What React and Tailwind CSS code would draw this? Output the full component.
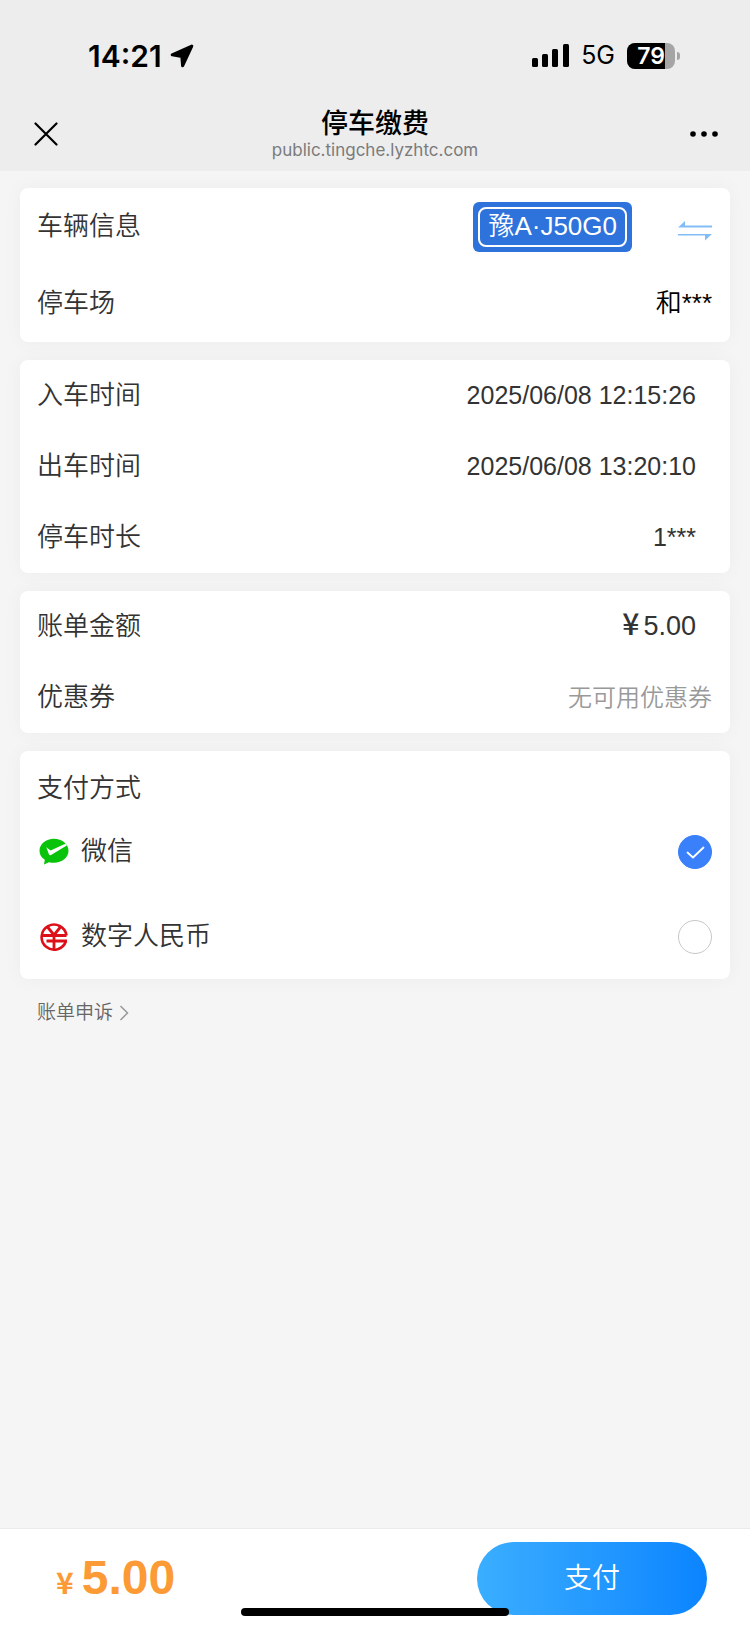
import React, { useState } from 'react';

const LocationArrow = () => (
  <svg className="h-6 w-6" viewBox="0 0 24 24" fill="currentColor" stroke="currentColor">
    <path strokeWidth={3} strokeLinejoin="round" d="M21.800 2L2.200 10.800l9.600 1.600 0.800 9.400z" />
  </svg>
);

const SignalBars = () => (
  <svg className="h-6 w-[37px]" viewBox="0 0 37 24" fill="currentColor">
    <rect x="0" y="14" width="6" height="9" rx="1.5" />
    <rect x="10" y="10" width="6" height="13" rx="1.5" />
    <rect x="20" y="5" width="6" height="18" rx="1.5" />
    <rect x="31" y="0" width="6" height="23" rx="1.5" />
  </svg>
);

const Battery = ({ level }) => (
  <div className="flex items-center gap-0.5">
    <div className="relative h-[26px] w-12 overflow-hidden rounded-lg bg-[#a5a5a5]">
      <div className="h-full bg-black" style={{ width: `${level}%` }} />
      <span className="absolute inset-0 text-center text-[23px] leading-[26px] font-semibold text-white">
        {level}
      </span>
    </div>
    <div className="h-2 w-[3px] rounded-r-full bg-[#a5a5a5]" />
  </div>
);

const SwapIcon = () => (
  <svg className="h-5 w-[34px]" viewBox="0 0 34 20" fill="#84bdf5">
    <path d="M0 6.500L7 0v4.600h27v1.900z" />
    <path d="M34 13L27 19.500v-4.900H0V13z" />
  </svg>
);

const WechatPayIcon = () => (
  <svg className="h-[30px] w-[30px]" viewBox="0 0 30 30">
    <path
      fill="#09c30b"
      d="M15 1.800C7 1.800.5 7.100.5 13.800c0 3.800 2 6.900 5.300 9L5 27.500l5-2.300c1.600.4 3.300.6 5 .6 8 0 14.500-5.300 14.500-12S23 1.800 15 1.800z"
    />
    <path fill="#fff" d="M7.300 10.300l4.300 3.300L26.800 6.400l1 2L12 18c-.9.500-1.600.3-2-.5z" />
  </svg>
);

const DigitalYuanIcon = () => (
  <svg className="h-[30px] w-[30px]" viewBox="0 0 30 30" fill="none" stroke="#dd1019">
    <path strokeWidth={2.600} d="M27.500 13.500A12.500 12.500 0 1 0 27 19" />
    <path strokeWidth={2.800} d="M8.500 5l6.500 8 6.500-8M15 12v15M3 13.500h24.500M7.500 19H28" />
  </svg>
);

const Card = ({ children }) => (
  <section className="rounded-lg bg-white pr-[18px] pl-[17px] shadow-[0_0_20px_rgba(0,0,0,0.04)]">
    {children}
  </section>
);

const Row = ({ label, children }) => (
  <div className="flex h-[71px] items-center justify-between">
    <span>{label}</span>
    {children}
  </div>
);

const times = [
  { label: '入车时间', value: '2025/06/08 12:15:26' },
  { label: '出车时间', value: '2025/06/08 13:20:10' },
  { label: '停车时长', value: '1***' },
];

const methods = [
  { id: 'wechat', name: '微信', Icon: WechatPayIcon },
  { id: 'ecny', name: '数字人民币', Icon: DigitalYuanIcon },
];

const PayMethod = ({ method, checked, onSelect }) => {
  const { Icon } = method;
  return (
    <label className="flex h-[85px] cursor-pointer items-center pl-0.5">
      <Icon />
      <span className="ml-3 flex-1">{method.name}</span>
      <span className="relative flex">
        <input
          type="radio"
          name="method"
          value={method.id}
          checked={checked}
          onChange={onSelect}
          className="h-[34px] w-[34px] appearance-none rounded-full border border-[#c8c8c8] bg-white checked:border-[#3a80fb] checked:bg-[#3a80fb]"
        />
        {checked && (
          <svg className="pointer-events-none absolute inset-0" viewBox="0 0 34 34" fill="none" stroke="#fff">
            <path strokeWidth={1.800} strokeLinecap="round" strokeLinejoin="round" d="M9.500 17.500l5.500 5L25.500 12.500" />
          </svg>
        )}
      </span>
    </label>
  );
};

export default function App() {
  const [selected, setSelected] = useState('wechat');

  return (
    <div className="flex min-h-screen flex-col bg-[#f5f5f5] font-['Liberation_Sans','Noto_Sans_CJK_SC',sans-serif] text-[26px] font-[350] text-[#333]">
      <header className="bg-[#ededed] font-['Inter','Noto_Sans_CJK_SC',sans-serif] text-black">
        {/* Status bar */}
        <div className="flex items-center justify-between pt-9 pr-[70px] pl-[88px]">
          <div className="flex h-10 items-center gap-2">
            <span className="text-[30px] font-semibold">14:21</span>
            <LocationArrow />
          </div>
          <div className="flex h-10 items-center gap-3">
            <SignalBars />
            <span className="text-[25px] font-normal">5G</span>
            <Battery level={79} />
          </div>
        </div>

        {/* Title bar */}
        <div className="flex h-[95px] items-center justify-between px-8 pt-5">
          <button type="button" aria-label="关闭" className="flex h-7 w-7 items-center justify-center">
            <svg className="h-6 w-6" viewBox="0 0 24 24" fill="none" stroke="currentColor">
              <path strokeWidth={2.200} strokeLinecap="round" d="M1.500 1.500l21 21M22.500 1.500l-21 21" />
            </svg>
          </button>
          <div className="flex flex-col items-center">
            <h1 className="text-[27px] leading-8 font-medium">停车缴费</h1>
            <p className="text-[17px] leading-5 font-normal text-[#7b7b7b]">public.tingche.lyzhtc.com</p>
          </div>
          <button type="button" aria-label="更多" className="flex h-7 w-7 items-center justify-center">
            <svg className="h-2 w-7" viewBox="0 0 28 8" fill="currentColor">
              <circle cx="3" cy="4" r="2.800" />
              <circle cx="14" cy="4" r="2.800" />
              <circle cx="25" cy="4" r="2.800" />
            </svg>
          </button>
        </div>
      </header>

      <main className="flex flex-1 flex-col gap-[18px] px-5 pt-[17px]">
        <Card>
          <div className="flex h-[77px] items-center">
            <span className="flex-1">车辆信息</span>
            <div className="rounded-md bg-[#2e72dc] p-[5px]">
              <div className="flex h-10 items-center rounded-lg border-2 border-white px-2 text-white">
                豫A·J50G0
              </div>
            </div>
            <button type="button" aria-label="切换车辆" className="ml-[46px] pt-2">
              <SwapIcon />
            </button>
          </div>
          <div className="flex h-[77px] items-center justify-between">
            <span>停车场</span>
            <span className="text-black">和***</span>
          </div>
        </Card>

        <Card>
          {times.map(({ label, value }) => (
            <Row key={label} label={label}>
              <span className="pr-4 text-[25px]">{value}</span>
            </Row>
          ))}
        </Card>

        <Card>
          <Row label="账单金额">
            <span className="flex items-baseline gap-1 pr-4 text-[27px]">
              <span className="font-['Noto_Sans_CJK_SC',sans-serif] text-[30px] leading-8 font-medium">¥</span>
              <span>5.00</span>
            </span>
          </Row>
          <Row label="优惠券">
            <span className="text-2xl text-[#999]">无可用优惠券</span>
          </Row>
        </Card>

        <Card>
          <h2 className="flex h-[58px] items-center pt-4">支付方式</h2>
          {methods.map((method) => (
            <PayMethod
              key={method.id}
              method={method}
              checked={selected === method.id}
              onSelect={() => setSelected(method.id)}
            />
          ))}
        </Card>

        <a href="#appeal" className="flex items-center gap-1.5 self-start pl-[17px] text-[19px] leading-8 text-[#666]">
          账单申诉
          <svg className="h-4 w-2.5" viewBox="0 0 10 16" fill="none" stroke="#999">
            <path strokeWidth={1.500} d="M1.500 1l7 7-7 7" />
          </svg>
        </a>
      </main>

      <footer className="sticky bottom-0 flex h-[102px] items-start justify-between border-t border-[#ebebeb] bg-white pt-[13px] pr-[43px] pl-14">
        <div className="flex h-[73px] items-baseline gap-2 pt-3 font-bold text-[#fc9a35]">
          <span className="font-['Noto_Sans_CJK_SC',sans-serif] text-[30px] leading-8">¥</span>
          <span className="text-5xl">5.00</span>
        </div>
        <button
          type="button"
          className="h-[73px] w-[230px] rounded-full bg-linear-to-r from-[#3aaeff] to-[#0a84ff] text-[28px] text-white"
        >
          支付
        </button>
        <div className="absolute bottom-3.5 left-1/2 h-2 w-[268px] -translate-x-1/2 rounded-full bg-black" />
      </footer>
    </div>
  );
}
